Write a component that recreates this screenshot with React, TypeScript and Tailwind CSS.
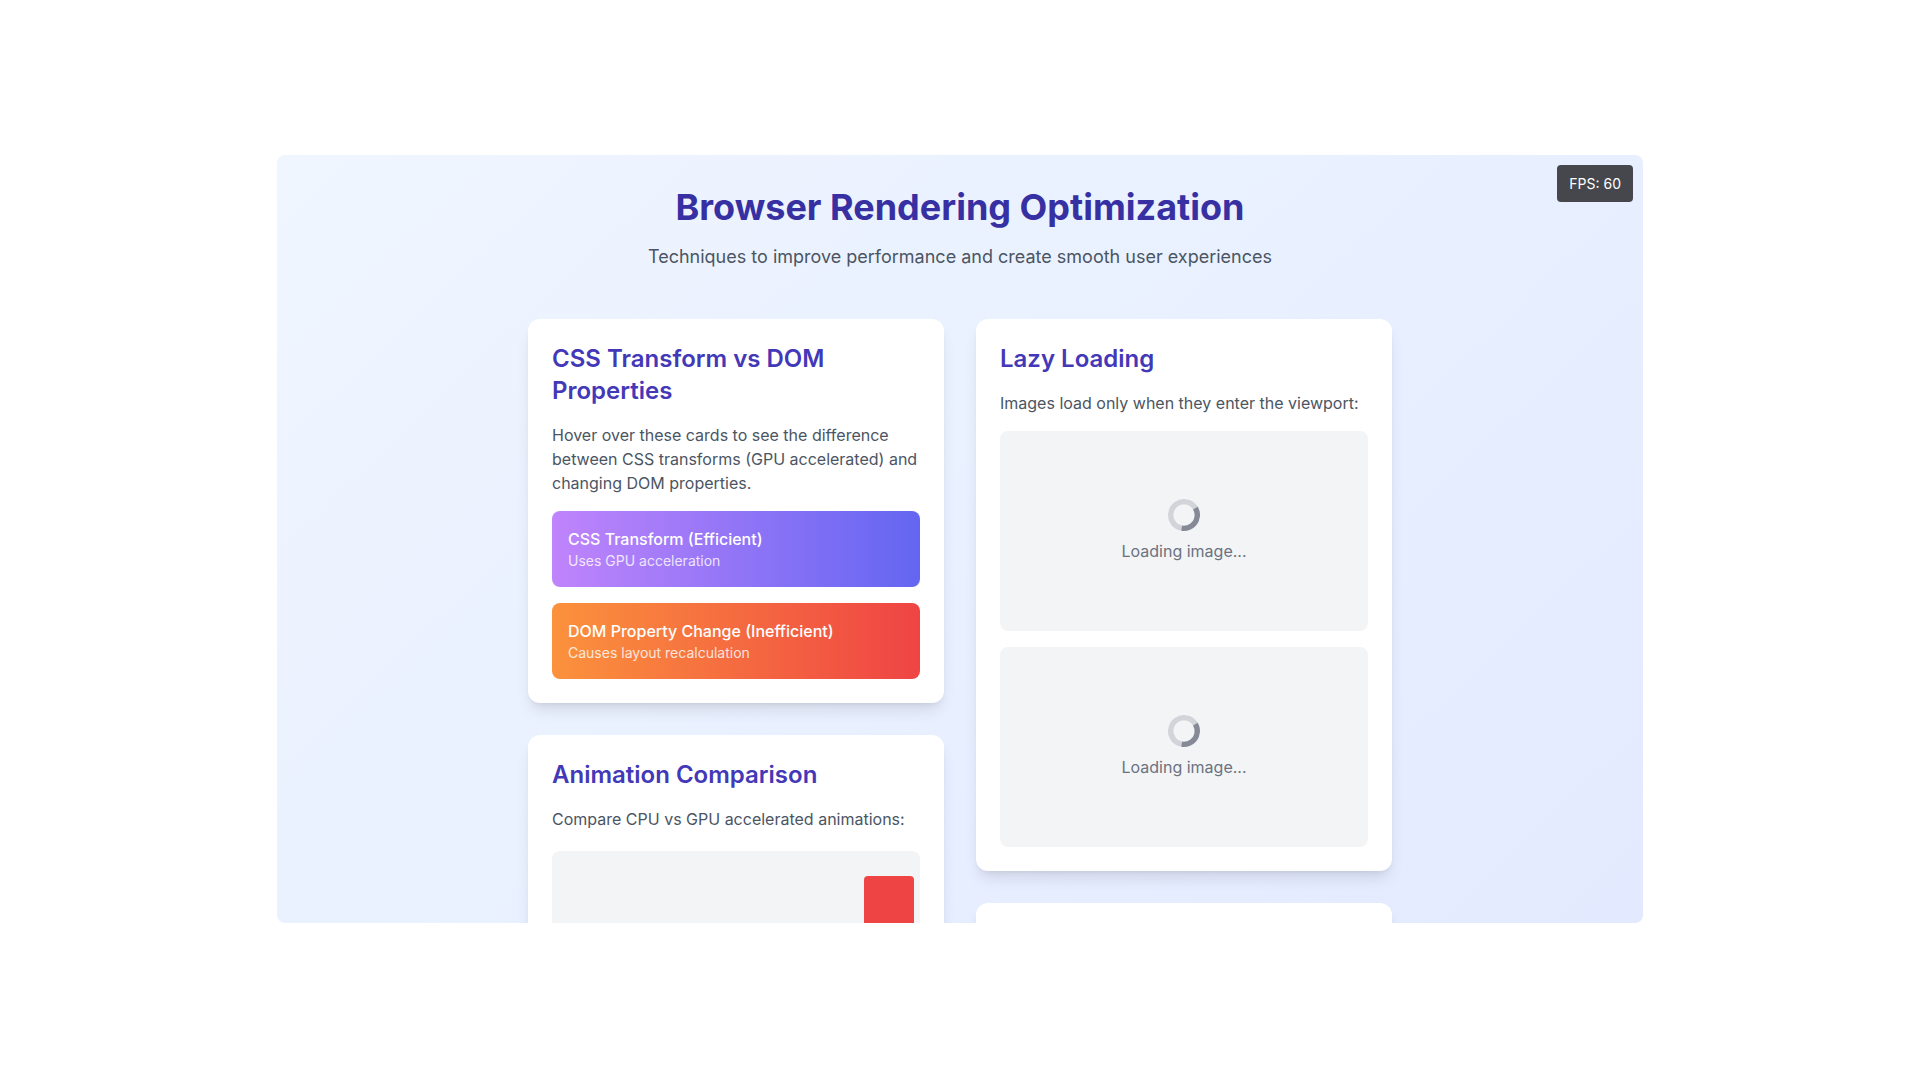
import type { ReactNode } from "react";

function Card({ title, children }: { title?: string; children?: ReactNode }) {
  return (
    <section className="rounded-xl bg-white p-6 shadow-lg">
      {title && <h2 className="mb-4 text-2xl font-semibold text-[#4338b8]">{title}</h2>}
      {children}
    </section>
  );
}

function Spinner() {
  return (
    <svg className="size-8 rotate-[190deg] text-[#6b7280]" viewBox="0 0 24 24" fill="none" aria-hidden="true">
      <circle className="opacity-25" cx="12" cy="12" r="10" stroke="currentColor" strokeWidth="4" />
      <path
        className="opacity-75"
        fill="currentColor"
        d="M4 12a8 8 0 018-8V0C5.373 0 0 5.373 0 12h4zm2 5.291A7.962 7.962 0 014 12H0c0 3.042 1.135 5.824 3 7.938l3-2.647z"
      />
    </svg>
  );
}

function ImagePlaceholder() {
  return (
    <div className="flex h-50 flex-col items-center justify-center gap-2 rounded-lg bg-[#f3f4f6] text-[#6b7280]">
      <Spinner />
      <p>Loading image...</p>
    </div>
  );
}

export default function App() {
  return (
    <div className="flex min-h-screen items-center justify-center bg-white pb-0.5 font-['Inter',sans-serif] text-base">
      <main className="relative h-[768px] w-full max-w-[1366px] overflow-hidden rounded-lg">
        <div className="absolute top-2.5 right-2.5 rounded bg-black/70 px-3 py-2 text-sm/[21px] text-white">
          FPS: 60
        </div>

        <div className="min-h-[1300px] bg-[linear-gradient(to_bottom_right,#eff6ff,#e0e7ff)] py-8">
          <div className="mx-auto max-w-4xl px-4">
            <header className="mb-12 text-center">
              <h1 className="mb-4 text-4xl font-bold text-[#3730a3]">Browser Rendering Optimization</h1>
              <p className="text-lg/7 text-[#4b5563]">
                Techniques to improve performance and create smooth user experiences
              </p>
            </header>

            <div className="grid grid-cols-1 items-start gap-8 md:grid-cols-2">
              <div className="flex flex-col gap-8">
                <Card title="CSS Transform vs DOM Properties">
                  <p className="mb-4 text-[#4b5563]">
                    Hover over these cards to see the difference between CSS transforms (GPU accelerated) and
                    changing DOM properties.
                  </p>
                  <div className="flex flex-col gap-4">
                    <div className="rounded-lg bg-[linear-gradient(to_right,#c084fc,#6366f1)] p-4 text-white transition-transform hover:scale-105">
                      <h3 className="font-medium">CSS Transform (Efficient)</h3>
                      <p className="text-sm opacity-80">Uses GPU acceleration</p>
                    </div>
                    <div className="rounded-lg bg-[linear-gradient(to_right,#fb923c,#ef4444)] p-4 text-white">
                      <h3 className="font-medium">DOM Property Change (Inefficient)</h3>
                      <p className="text-sm opacity-80">Causes layout recalculation</p>
                    </div>
                  </div>
                </Card>

                <Card title="Animation Comparison">
                  <p className="mb-5 text-[#4b5563]">Compare CPU vs GPU accelerated animations:</p>
                  <div className="flex h-25 items-center justify-end rounded-lg bg-[#f3f4f6] px-1.5">
                    <div className="size-[50px] rounded bg-[#ef4444]" />
                  </div>
                </Card>
              </div>

              <div className="flex flex-col gap-8">
                <Card title="Lazy Loading">
                  <p className="mb-4 text-[#4b5563]">Images load only when they enter the viewport:</p>
                  <div className="flex flex-col gap-4">
                    <ImagePlaceholder />
                    <ImagePlaceholder />
                  </div>
                </Card>
                <Card />
              </div>
            </div>
          </div>
        </div>
      </main>
    </div>
  );
}
